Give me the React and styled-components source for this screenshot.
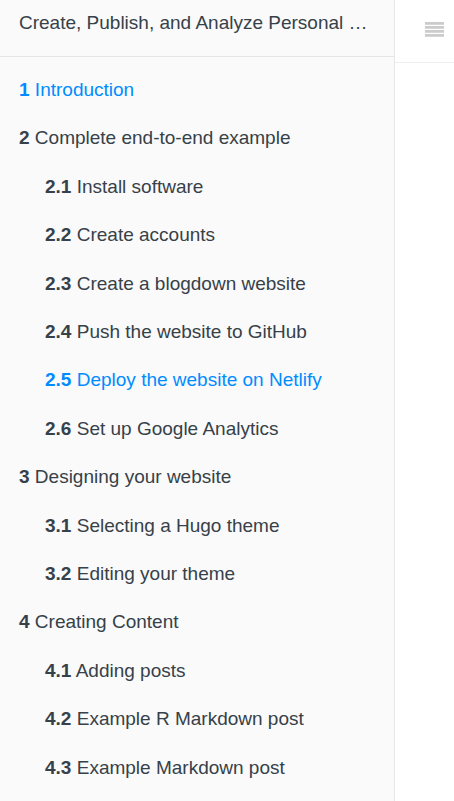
import React from "react";
import styled, { createGlobalStyle } from "styled-components";

const Global = createGlobalStyle`
  html, body { margin: 0; padding: 0; background: #fff; }
  body { font-family: "Liberation Sans", Arial, sans-serif; }
  * { box-sizing: border-box; }
`;

const Layout = styled.div`
  display: flex;
  width: 454px;
  height: 801px;
  overflow: hidden;
`;

const Sidebar = styled.nav`
  width: 395px;
  flex: none;
  background: #fafafa;
  border-right: 1px solid #e7e7e7;
  display: flex;
  flex-direction: column;
  overflow: hidden;
`;

const BookTitle = styled.div`
  flex: none;
  height: 57px;
  padding: 11px 24px 0 19px;
  border-bottom: 1px solid #e5e5e5;
  font-size: 19px;
  line-height: 24px;
  color: #364149;
  white-space: nowrap;
  overflow: hidden;
  text-overflow: ellipsis;
`;

const List = styled.ul`
  flex: none;
  list-style: none;
  margin: 0;
  padding: 9px 0 0 0;
`;

const Item = styled.li`
  padding: 13px 19px 13px ${(p) => (p.$level === 2 ? 45 : 19)}px;
  font-size: 19px;
  line-height: 22.4px;
  color: ${(p) => (p.$active ? "#008cff" : "#364149")};
  white-space: nowrap;
`;

const Num = styled.b`
  font-weight: bold;
`;

const Main = styled.div`
  flex: 1;
  background: #fff;
`;

const TopBar = styled.div`
  height: 63px;
  border-bottom: 1px solid #eee;
  display: flex;
  align-items: flex-start;
  padding: 22px 0 0 30px;
`;

const MenuIcon = () => (
  <svg width="19" height="15" viewBox="0 0 19 15">
    {[0, 4, 8, 12].map((y) => (
      <rect key={y} x="0" y={y} width="19" height="2.8" fill="#cccccc" />
    ))}
  </svg>
);

const items = [
  { n: "1", t: "Introduction", l: 1, a: true },
  { n: "2", t: "Complete end-to-end example", l: 1 },
  { n: "2.1", t: "Install software", l: 2 },
  { n: "2.2", t: "Create accounts", l: 2 },
  { n: "2.3", t: "Create a blogdown website", l: 2 },
  { n: "2.4", t: "Push the website to GitHub", l: 2 },
  { n: "2.5", t: "Deploy the website on Netlify", l: 2, a: true },
  { n: "2.6", t: "Set up Google Analytics", l: 2 },
  { n: "3", t: "Designing your website", l: 1 },
  { n: "3.1", t: "Selecting a Hugo theme", l: 2 },
  { n: "3.2", t: "Editing your theme", l: 2 },
  { n: "4", t: "Creating Content", l: 1 },
  { n: "4.1", t: "Adding posts", l: 2 },
  { n: "4.2", t: "Example R Markdown post", l: 2 },
  { n: "4.3", t: "Example Markdown post", l: 2 },
];

export default function App() {
  return (
    <>
      <Global />
      <Layout>
        <Sidebar>
          <BookTitle>Create, Publish, and Analyze Personal Websites Using R and RStudio</BookTitle>
          <List>
            {items.map((it) => (
              <Item key={it.n} $level={it.l} $active={it.a}>
                <Num>{it.n}</Num> {it.t}
              </Item>
            ))}
          </List>
        </Sidebar>
        <Main>
          <TopBar>
            <MenuIcon />
          </TopBar>
        </Main>
      </Layout>
    </>
  );
}
